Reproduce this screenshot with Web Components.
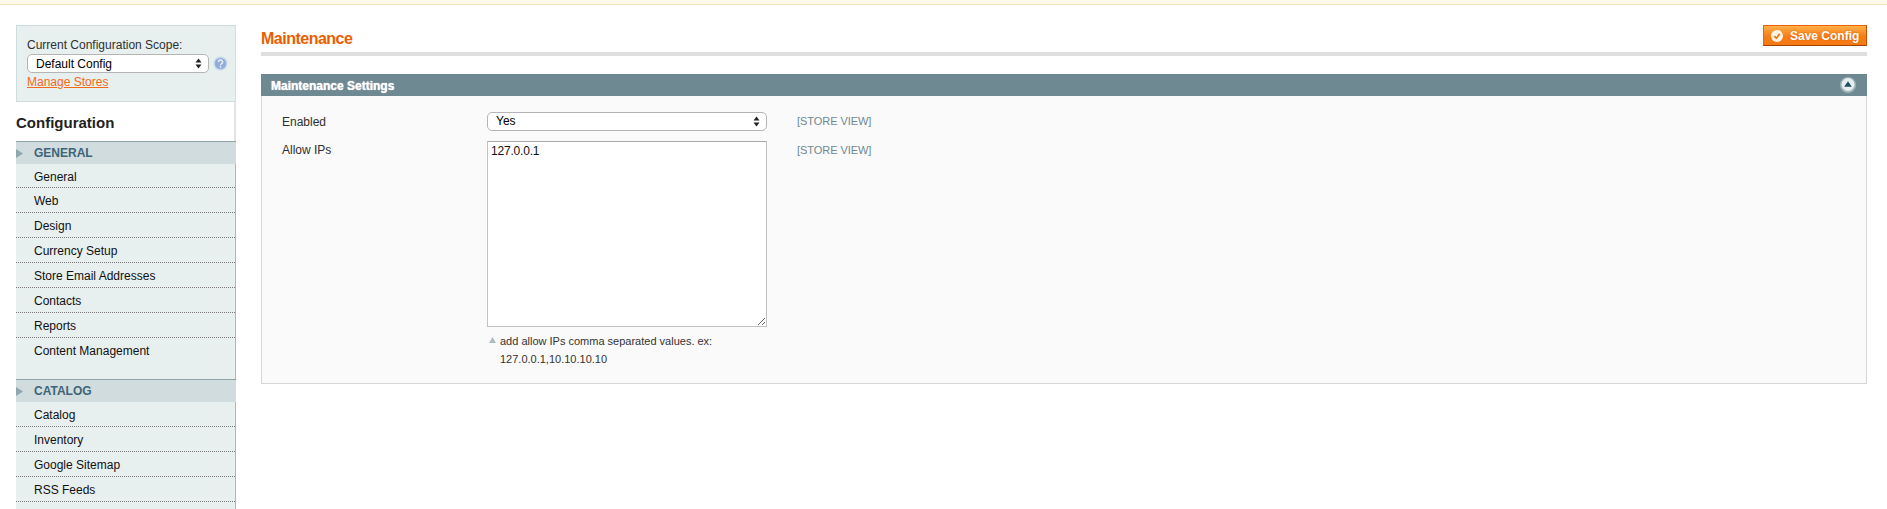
<!DOCTYPE html>
<html><head><meta charset="utf-8"><title>Maintenance</title>
<style>
html,body{margin:0;padding:0;height:509px;overflow:hidden;background:#fff;font:12px "Liberation Sans",Arial,sans-serif;color:#2f2f2f}
</style></head><body>
<admin-page>
  <config-sidebar slot="side">
    <scope-box></scope-box>
    <side-heading>Configuration</side-heading>
    <side-section title="GENERAL" pad="16" first="24" items="General|Web|Design|Currency Setup|Store Email Addresses|Contacts|Reports|Content Management"></side-section>
    <side-section title="CATALOG" pad="20" first="25" open-end items="Catalog|Inventory|Google Sitemap|RSS Feeds"></side-section>
  </config-sidebar>
  <page-title slot="main"></page-title>
  <settings-panel slot="main"></settings-panel>
</admin-page>
<script>
function def(name, html, init){
  customElements.define(name, class extends HTMLElement{
    connectedCallback(){
      if(this.shadowRoot) return;
      const r=this.attachShadow({mode:'open'});
      r.innerHTML=html;
      if(init) init(this,r);
    }
  });
}
const selectCss=`select{appearance:none;-webkit-appearance:none;display:block;flex:none;box-sizing:border-box;height:19px;border:1px solid #b5b5b5;border-radius:5px;background:#fff url("data:image/svg+xml,%3Csvg xmlns='http://www.w3.org/2000/svg' width='7' height='11'%3E%3Cpath d='M3.5 0.5L6.5 4.5H0.5ZM3.5 10.5L0.5 6.5H6.5Z' fill='%23222'/%3E%3C/svg%3E") no-repeat right 6px center;font:12px "Liberation Sans",Arial,sans-serif;color:#000;outline:0;margin:0}`;

def('admin-page',`<style>
:host{display:block}
.notice{height:4px;background:#fff9e9;border-bottom:1px solid #f6e2bb}
.wrap{display:flex;padding:20px 20px 0 16px;align-items:flex-start}
.side{flex:0 0 220px;width:220px}
.main{flex:1;margin-left:25px;min-width:0}
</style><div class="notice"></div><div class="wrap"><div class="side"><slot name="side"></slot></div><div class="main"><slot name="main"></slot></div></div>`);

def('config-sidebar',`<style>:host{display:block}</style><slot></slot>`);

def('scope-box',`<style>
:host{display:block;box-sizing:border-box;height:77px;background:#e7efef;border:1px solid #cddddd;border-right-color:#d3dfdf;padding:12px 0 0 10px}
.lbl{line-height:14px;color:#2f2f2f}
.row{display:flex;align-items:center;gap:4px;margin-top:2px}
${selectCss}
select{width:182px;padding:0 0 0 8px}
a{display:block;margin-top:2px;text-decoration:underline;line-height:14px;color:#f26a1b}
svg{display:block;flex:none}
</style>
<div class="lbl">Current Configuration Scope:</div>
<div class="row"><select><option>Default Config</option></select>
<svg width="15" height="15" viewBox="0 0 15 15"><circle cx="7.5" cy="7.5" r="7" fill="#c8d8ec"/><circle cx="7.5" cy="7.5" r="5.6" fill="#8fadd8"/><path d="M5.400 6a2.100 2 0 1 1 3.200 1.700c-.7.4-1.100.8-1.100 1.500" fill="none" stroke="#e8eef8" stroke-width="1.500"/><rect x="6.700" y="10" width="1.600" height="1.600" fill="#e8eef8"/></svg></div>
<a href="#">Manage Stores</a>`);

def('side-heading',`<style>
:host{display:block;box-sizing:border-box;height:39px;padding-top:1px;line-height:39px;background:#fff;border-right:2px solid #e4e4e4;font-size:15px;font-weight:bold;color:#222}
</style><slot></slot>`);

def('side-section',`<style>
:host{display:block;background:#e7efef}
.h{box-sizing:border-box;height:23px;background:#d0dcdd;border-top:1px solid #8ea3a8;display:flex;align-items:center;font-weight:bold;color:#3e6478}
.h svg{margin-right:11px;display:block}
.list{border-right:1px solid #a9b8ba}
.it{box-sizing:border-box;height:25px;line-height:26px;padding-left:18px;color:#111;border-bottom:1px dotted #777}
.it:first-child{line-height:26px}
.it.last{border-bottom:0}
</style><div class="h"><svg width="7" height="9" viewBox="0 0 7 9"><path d="M0 0L7 4.500L0 9Z" fill="#8fa8ae"/></svg><span class="t"></span></div><div class="list"></div>`,
(el,r)=>{
  r.querySelector('.t').textContent=el.getAttribute('title');
  el.removeAttribute('title');
  const l=r.querySelector('.list');
  const items=el.getAttribute('items').split('|');
  const open=el.hasAttribute('open-end');
  items.forEach((t,i)=>{const d=document.createElement('div');d.className='it'+(i==items.length-1&&!open?' last':'');d.textContent=t;if(i==0)d.style.height=el.getAttribute('first')+'px';l.appendChild(d)});
  l.style.paddingBottom=el.getAttribute('pad')+'px';
});

def('page-title',`<style>
:host{display:block;box-sizing:border-box;height:31px;border-bottom:4px solid #dfdfdf;margin-bottom:18px}
.row{display:flex;justify-content:space-between;align-items:flex-start}
h3{margin:0;font-size:16px;line-height:18px;padding-top:5px;color:#eb5e00;font-weight:bold;letter-spacing:-.5px}
button{box-sizing:border-box;width:104px;height:21px;padding:0 0 0 7px;display:flex;align-items:center;gap:7px;border:1px solid #ed6502;border-right-color:#c25208;border-bottom-color:#a04300;background:linear-gradient(#fdb04a,#f77c16 55%,#f67a12);color:#fff;font:bold 12px "Liberation Sans",Arial,sans-serif;text-shadow:0 0 2px #e06000;cursor:pointer;margin:0}
svg{display:block;flex:none}
</style><div class="row"><h3>Maintenance</h3><button><svg width="12" height="12" viewBox="0 0 12 12"><circle cx="6" cy="6" r="6" fill="#fff5e6"/><path d="M3.300 6.100L5.300 8.200L8.800 3.900" fill="none" stroke="#e87a15" stroke-width="1.700"/></svg><span>Save Config</span></button></div>`);

def('settings-panel',`<style>
:host{display:block}
.h{box-sizing:border-box;height:22px;padding:1px 11px 0 10px;background:#6f8992;display:flex;align-items:center;justify-content:space-between;color:#fff;font-weight:bold;text-shadow:0 0 1px #fff}
.h svg{display:block;margin-top:-1px}
.b{box-sizing:border-box;height:288px;background:#fafafa;border:1px solid #d6d6d6;border-top:0;padding:16px 20px 0;display:grid;grid-template-columns:205px 280px auto;grid-template-rows:auto auto auto;justify-content:start;align-content:start;align-items:start}
label{line-height:17px;padding-top:2px;color:#2f2f2f}
.lb2{line-height:14px;padding-top:2px}
.sv{font-size:11px;line-height:19px;color:#6f8992;padding-left:30px;letter-spacing:-.05px}
${selectCss}
select{width:280px;padding:0 0 2px 8px}
textarea{display:block;box-sizing:border-box;width:280px;height:186px;border:1px solid #aaa;border-color:#aaa #c2c2c2 #c2c2c2;background:#fff;padding:2px 3px;margin:0;font:12px/15px "Liberation Sans",Arial,sans-serif;letter-spacing:-.2px;color:#111;outline:0;resize:vertical}
.c2{margin-top:10px}
.note{grid-column:2;font-size:11px;line-height:18px;padding:5px 0 0 13px;position:relative;color:#333}
.note svg{position:absolute;left:2px;top:10px}
</style>
<div class="h"><span>Maintenance Settings</span><svg width="16" height="16" viewBox="0 0 16 16"><circle cx="8" cy="8" r="8" fill="#9fb3b8"/><circle cx="8" cy="7.500" r="6.500" fill="#e6eeef"/><path d="M8 4.200L11.800 9.800H4.200Z" fill="#1f4f63"/></svg></div>
<div class="b">
<label>Enabled</label><select><option>Yes</option></select><div class="sv">[STORE VIEW]</div>
<label class="c2 lb2">Allow IPs</label><textarea class="c2">127.0.0.1</textarea><div class="sv c2">[STORE VIEW]</div>
<div class="note"><svg width="7" height="6" viewBox="0 0 7 6"><path d="M3.500 0L7 6H0Z" fill="#aebdc3"/></svg>add allow IPs comma separated values. ex: 127.0.0.1,10.10.10.10</div>
</div>`);
</script>
</body></html>
